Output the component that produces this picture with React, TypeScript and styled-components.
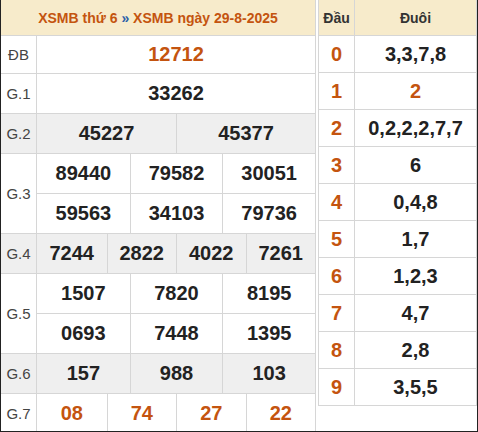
import React from 'react';
import styled, { createGlobalStyle } from 'styled-components';

const Global = createGlobalStyle`
  html, body { margin: 0; padding: 0; background: #fff; }
  body { font-family: "Liberation Sans", Arial, sans-serif; }
  * { box-sizing: border-box; }
`;

const ORANGE = '#c4540f';
const LINE = '#d6d6d6';

const Frame = styled.div`
  width: 478px;
  height: 432px;
  border: 1px solid #222;
  border-top: none;
  overflow: hidden;
  display: flex;
  gap: 2px;
  align-items: flex-start;
  background: #fff;
`;

const Results = styled.div`
  width: 315px;
  flex: none;
  border-right: 1px solid ${LINE};
`;

const Title = styled.div`
  height: 36px;
  background: #f7ebcb;
  border-bottom: 1px solid ${LINE};
  display: flex;
  align-items: center;
  justify-content: center;
  font-size: 14px;
  font-weight: bold;
  color: ${ORANGE};
  white-space: pre;
`;

const Sep = styled.span`
  color: #2b5fa8;
`;

const Row = styled.div<{ $shade?: boolean }>`
  display: grid;
  grid-template-columns: 36px 1fr;
  border-bottom: 1px solid ${LINE};
  background: ${(p) => (p.$shade ? '#efefef' : '#fff')};
`;

const Label = styled.div`
  border-right: 1px solid ${LINE};
  display: flex;
  align-items: center;
  justify-content: center;
  font-size: 15px;
  color: #444;
`;

const Lines = styled.div`
  display: flex;
  flex-direction: column;
`;

const Line = styled.div<{ $cols: number; $h: number }>`
  display: grid;
  grid-template-columns: repeat(${(p) => p.$cols}, 1fr);
  height: ${(p) => p.$h}px;
  & + & {
    border-top: 1px solid ${LINE};
    height: ${(p) => p.$h + 1}px;
  }
`;

const Num = styled.div<{ $hot?: boolean }>`
  display: flex;
  align-items: center;
  justify-content: center;
  font-size: 20px;
  font-weight: bold;
  color: ${(p) => (p.$hot ? ORANGE : '#222')};
  & + & {
    border-left: 1px solid ${LINE};
  }
`;

const Heads = styled.div`
  width: 159px;
  flex: none;
  border: 1px solid ${LINE};
  border-top: none;
`;

const HeadTitle = styled.div`
  display: grid;
  grid-template-columns: 35px 1fr;
  height: 36px;
  background: #f7ebcb;
  border-bottom: 1px solid ${LINE};
`;

const HeadCell = styled.div`
  display: flex;
  align-items: center;
  justify-content: center;
  font-size: 14px;
  font-weight: bold;
  color: #333;
  & + & {
    border-left: 1px solid ${LINE};
  }
`;

const HeadRow = styled.div`
  display: grid;
  grid-template-columns: 35px 1fr;
  height: 37px;
  & + & {
    border-top: 1px solid ${LINE};
  }
  &:first-of-type {
    height: 36px;
  }
`;

const HeadBody = styled.div`
  display: flex;
  flex-direction: column;
`;

const Digit = styled.div<{ $hot?: boolean }>`
  display: flex;
  align-items: center;
  justify-content: center;
  font-size: 20px;
  font-weight: bold;
  color: ${(p) => (p.$hot ? ORANGE : '#222')};
  & + & {
    border-left: 1px solid ${LINE};
  }
`;

type Prize = { label: string; lines: string[][]; shade?: boolean; hot?: boolean; h?: number };

const prizes: Prize[] = [
  { label: 'ĐB', lines: [['12712']], hot: true, h: 37 },
  { label: 'G.1', lines: [['33262']] },
  { label: 'G.2', lines: [['45227', '45377']], shade: true },
  { label: 'G.3', lines: [['89440', '79582', '30051'], ['59563', '34103', '79736']] },
  { label: 'G.4', lines: [['7244', '2822', '4022', '7261']], shade: true },
  { label: 'G.5', lines: [['1507', '7820', '8195'], ['0693', '7448', '1395']] },
  { label: 'G.6', lines: [['157', '988', '103']], shade: true },
  { label: 'G.7', lines: [['08', '74', '27', '22']], hot: true },
];

const heads: { d: string; t: string; hot?: boolean }[] = [
  { d: '0', t: '3,3,7,8' },
  { d: '1', t: '2', hot: true },
  { d: '2', t: '0,2,2,2,7,7' },
  { d: '3', t: '6' },
  { d: '4', t: '0,4,8' },
  { d: '5', t: '1,7' },
  { d: '6', t: '1,2,3' },
  { d: '7', t: '4,7' },
  { d: '8', t: '2,8' },
  { d: '9', t: '3,5,5' },
];

export default function App() {
  return (
    <>
      <Global />
      <Frame>
        <Results>
          <Title>
            XSMB thứ 6 <Sep>»</Sep> XSMB ngày 29-8-2025
          </Title>
          {prizes.map((p) => (
            <Row key={p.label} $shade={p.shade}>
              <Label>{p.label}</Label>
              <Lines>
                {p.lines.map((line, i) => (
                  <Line key={i} $cols={line.length} $h={p.h ?? 39}>
                    {line.map((n, j) => (
                      <Num key={j} $hot={p.hot}>
                        {n}
                      </Num>
                    ))}
                  </Line>
                ))}
              </Lines>
            </Row>
          ))}
        </Results>
        <Heads>
          <HeadTitle>
            <HeadCell>Đầu</HeadCell>
            <HeadCell>Đuôi</HeadCell>
          </HeadTitle>
          <HeadBody>
            {heads.map((h) => (
              <HeadRow key={h.d}>
                <Digit $hot>{h.d}</Digit>
                <Digit $hot={h.hot}>{h.t}</Digit>
              </HeadRow>
            ))}
          </HeadBody>
        </Heads>
      </Frame>
    </>
  );
}
